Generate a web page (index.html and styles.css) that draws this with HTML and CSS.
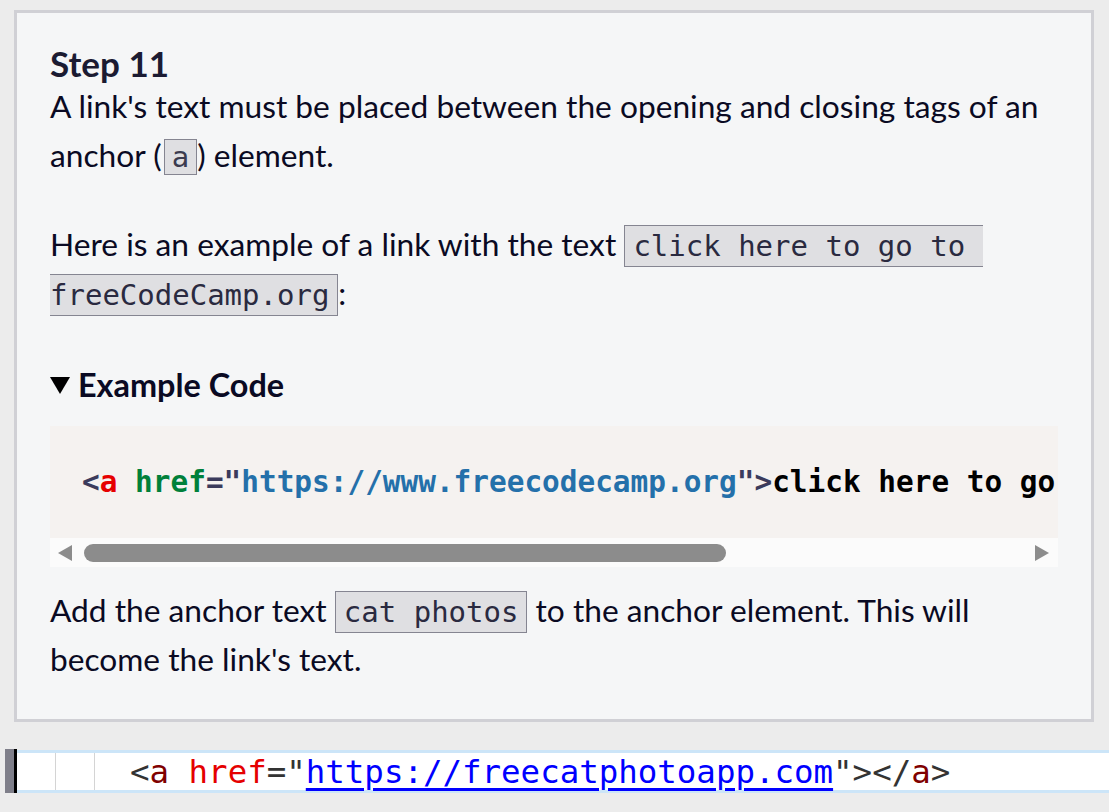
FILE: index.html
```html
<!DOCTYPE html>
<html lang="en">
<head>
<meta charset="utf-8">
<title>Step 11</title>
<link rel="stylesheet" href="styles.css">
</head>
<body>
<main class="page">
  <section class="panel">
    <h2 class="title">Step 11</h2>
    <p class="para">A link's text must be placed between the opening and closing tags of an anchor (<code class="code code-tight">a</code>) element.</p>
    <p class="para">Here is an example of a link with the text <code class="code code-wrap">click here to go to freeCodeCamp.org</code>:</p>
    <details class="example" open>
      <summary class="summary"><span class="arrow"></span>Example Code</summary>
      <div class="codebox">
        <pre class="pre"><code class="block"><span class="t-punc">&lt;</span><span class="t-tag">a</span> <span class="t-attr">href</span><span class="t-punc">="</span><span class="t-val">https://www.freecodecamp.org</span><span class="t-punc">"&gt;</span>click here to go to freeCodeCamp.org<span class="t-punc">&lt;/</span><span class="t-tag">a</span><span class="t-punc">&gt;</span></code></pre>
        <div class="scrollbar">
          <span class="sb-arrow sb-left"></span>
          <div class="sb-track"><div class="sb-thumb"></div></div>
          <span class="sb-arrow sb-right"></span>
        </div>
      </div>
    </details>
    <p class="para">Add the anchor text <code class="code">cat photos</code> to the anchor element. This will become the link's text.</p>
  </section>
  <div class="editor">
    <div class="gutter"></div>
    <div class="cursor"></div>
    <div class="line">
      <span class="indent"></span><span class="indent"></span><span class="src"><span class="e-punc">&lt;</span><span class="e-tag">a</span> <span class="e-attr">href</span><span class="e-punc">="</span><span class="e-link">https://freecatphotoapp.com</span><span class="e-punc">"&gt;&lt;/</span><span class="e-tag">a</span><span class="e-punc">&gt;</span></span>
    </div>
  </div>
</main>
</body>
</html>
```

FILE: styles.css
```css
html, body {
  margin: 0;
  padding: 0;
}
body {
  background: #ececec;
  font-family: Lato, "Noto Sans", sans-serif;
  color: #0a0a23;
  width: 1109px;
  height: 812px;
  overflow: hidden;
}
.page {
  padding: 10px 15px 0 14px;
}
.panel {
  background: #f5f6f7;
  border: 3px solid #d0d0d5;
  padding: 31px 33px 14px 33px;
  box-sizing: border-box;
  width: 1080px;
  height: 712px;
}
.title {
  margin: 0;
  font-size: 35px;
  font-weight: 700;
  line-height: 38px;
  color: #1b1b32;
}
.para {
  margin: 0 0 40px 0;
  font-size: 31.7px;
  line-height: 49px;
}
.code {
  font-family: "DejaVu Sans Mono", monospace;
  font-size: 29px;
  line-height: 1;
  color: #2a2a40;
  background: #dfdfe2;
  border: 1px solid #858591;
  padding: 3px 8px;
}
.code-tight {
  padding: 0 7px;
  margin-left: 2px;
  color: #3b3b4f;
}
.code-wrap {
  white-space: break-spaces;
}
.example {
  margin: 47px 0 19px 0;
}
.summary {
  list-style: none;
  display: flex;
  align-items: center;
  font-size: 32.4px;
  font-weight: 700;
  line-height: 40px;
  margin: 0 0 21px 0;
  cursor: pointer;
}
.summary::-webkit-details-marker {
  display: none;
}
.arrow {
  width: 0;
  height: 0;
  border-left: 10px solid transparent;
  border-right: 10px solid transparent;
  border-top: 17px solid #000;
  margin-right: 8px;
  margin-top: 1px;
}
.codebox {
  width: 1008px;
}
.pre {
  margin: 0;
  background: #f5f2f0;
  padding: 36px 32px;
  overflow: hidden;
  white-space: pre;
}
.block {
  font-family: "DejaVu Sans Mono", monospace;
  font-size: 29.4px;
  font-weight: 700;
  line-height: 40px;
  color: #000;
}
.t-punc { color: #3b3b5c; }
.t-tag { color: #e60000; }
.t-attr { color: #00803a; }
.t-val { color: #2470aa; }
.scrollbar {
  height: 29px;
  background: #fbfbfb;
  display: flex;
  align-items: center;
  padding: 0 9px 0 8px;
  gap: 12px;
}
.sb-arrow {
  width: 0;
  height: 0;
  border-top: 8px solid transparent;
  border-bottom: 8px solid transparent;
}
.sb-left {
  border-right: 14px solid #8c8c8c;
}
.sb-right {
  border-left: 14px solid #8c8c8c;
}
.sb-track {
  flex: 1;
  height: 18px;
}
.sb-thumb {
  width: 642px;
  height: 18px;
  border-radius: 9px;
  background: #8c8c8c;
}
.editor {
  margin: 27px 0 0 -9px;
  display: flex;
  height: 44px;
  width: 1104px;
}
.gutter {
  width: 9px;
  background: #7f7f8a;
}
.cursor {
  width: 3px;
  background: #000;
}
.line {
  flex: 1;
  display: flex;
  align-items: center;
  background: #fff;
  border-top: 3px solid #cce5f8;
  border-bottom: 3px solid #cce5f8;
  margin: 1px 0 0 0;
  height: 37px;
  font-family: "DejaVu Sans Mono", monospace;
  font-size: 32.45px;
  white-space: pre;
}
.indent {
  width: 38px;
  height: 100%;
  border-right: 1px solid #d4d4d4;
  flex: none;
}
.src {
  padding-left: 35px;
  color: #333;
}
.e-punc { color: #333; }
.e-tag { color: #800000; }
.e-attr { color: #e50000; }
.e-link {
  color: #0000ff;
  text-decoration: underline;
  text-decoration-thickness: 3px;
  text-underline-offset: 5px;
}
```
